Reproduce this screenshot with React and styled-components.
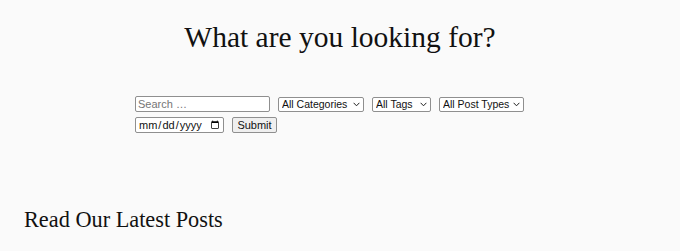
import React from "react";
import styled, { createGlobalStyle } from "styled-components";

const GlobalStyle = createGlobalStyle`
	html, body {
		margin: 0;
		padding: 0;
		background: #fafafa;
	}
	body {
		width: 680px;
		height: 251px;
		overflow: hidden;
		font-family: "Liberation Sans", Arial, sans-serif;
		color: #111;
	}
`;

const Page = styled.div`
	display: flex;
	flex-direction: column;
	padding-top: 19px;
`;

const Title = styled.h1`
	margin: 0;
	font-family: "Liberation Serif", "Times New Roman", serif;
	font-weight: 400;
	font-size: 29.5px;
	line-height: 36px;
	text-align: center;
	color: #111;
`;

const SearchForm = styled.form`
	width: 410px;
	margin: 41px auto 0;
	display: flex;
	flex-wrap: wrap;
	align-items: center;
	column-gap: 8px;
	row-gap: 5px;
`;

const Field = styled.input`
	box-sizing: border-box;
	width: ${(props) => props.$width}px;
	height: 16px;
	margin: 0;
	padding: 0 2px;
	border: 1px solid #8f8f8f;
	border-radius: 2px;
	background: #fff;
	font-family: "Liberation Sans", Arial, sans-serif;
	font-size: 11px;
	color: #111;
	outline: none;

	&::placeholder {
		color: #767676;
	}

	&::-webkit-calendar-picker-indicator {
		margin: 0 1px 0 4px;
		padding: 0;
		width: 10px;
		height: 10px;
	}

	&::-webkit-datetime-edit {
		padding: 0;
	}
`;

const SelectBox = styled.label`
	box-sizing: border-box;
	width: ${(props) => props.$width}px;
	height: 15px;
	display: flex;
	align-items: center;
	gap: 2px;
	padding: 0 3px 0 3px;
	border: 1px solid #8f8f8f;
	border-radius: 2px;
	background: #fff;
`;

const Select = styled.select`
	flex: 1;
	min-width: 0;
	appearance: none;
	-webkit-appearance: none;
	margin: 0;
	padding: 0;
	border: none;
	outline: none;
	background: transparent;
	font-family: "Liberation Sans", Arial, sans-serif;
	font-size: 10.5px;
	line-height: 13px;
	color: #111;
`;

const Chevron = styled.svg`
	flex: none;
	width: 7px;
	height: 5px;
`;

const Submit = styled.button`
	box-sizing: border-box;
	width: 45px;
	height: 16px;
	margin: 0;
	padding: 0;
	border: 1px solid #8f8f8f;
	border-radius: 2px;
	background: #efefef;
	font-family: "Liberation Sans", Arial, sans-serif;
	font-size: 11px;
	line-height: 14px;
	color: #111;
`;

const SectionTitle = styled.h2`
	margin: 73px 0 0 24px;
	font-family: "Liberation Serif", "Times New Roman", serif;
	font-weight: 400;
	font-size: 22.3px;
	line-height: 28px;
	color: #111;
`;

function Dropdown({ width, label }) {
	return (
		<SelectBox $width={width}>
			<Select defaultValue="">
				<option value="">{label}</option>
			</Select>
			<Chevron viewBox="0 0 7 5">
				<path d="M0.6 0.8 L3.5 3.8 L6.4 0.8" fill="none" stroke="#222" strokeWidth="1" />
			</Chevron>
		</SelectBox>
	);
}

export default function App() {
	return (
		<>
			<GlobalStyle />
			<Page>
				<Title>What are you looking for?</Title>
				<SearchForm onSubmit={(e) => e.preventDefault()}>
					<Field type="search" placeholder="Search …" $width={135} />
					<Dropdown width={86} label="All Categories" />
					<Dropdown width={59} label="All Tags" />
					<Dropdown width={85} label="All Post Types" />
					<Field type="date" $width={89} />
					<Submit type="submit">Submit</Submit>
				</SearchForm>
				<SectionTitle>Read Our Latest Posts</SectionTitle>
			</Page>
		</>
	);
}
